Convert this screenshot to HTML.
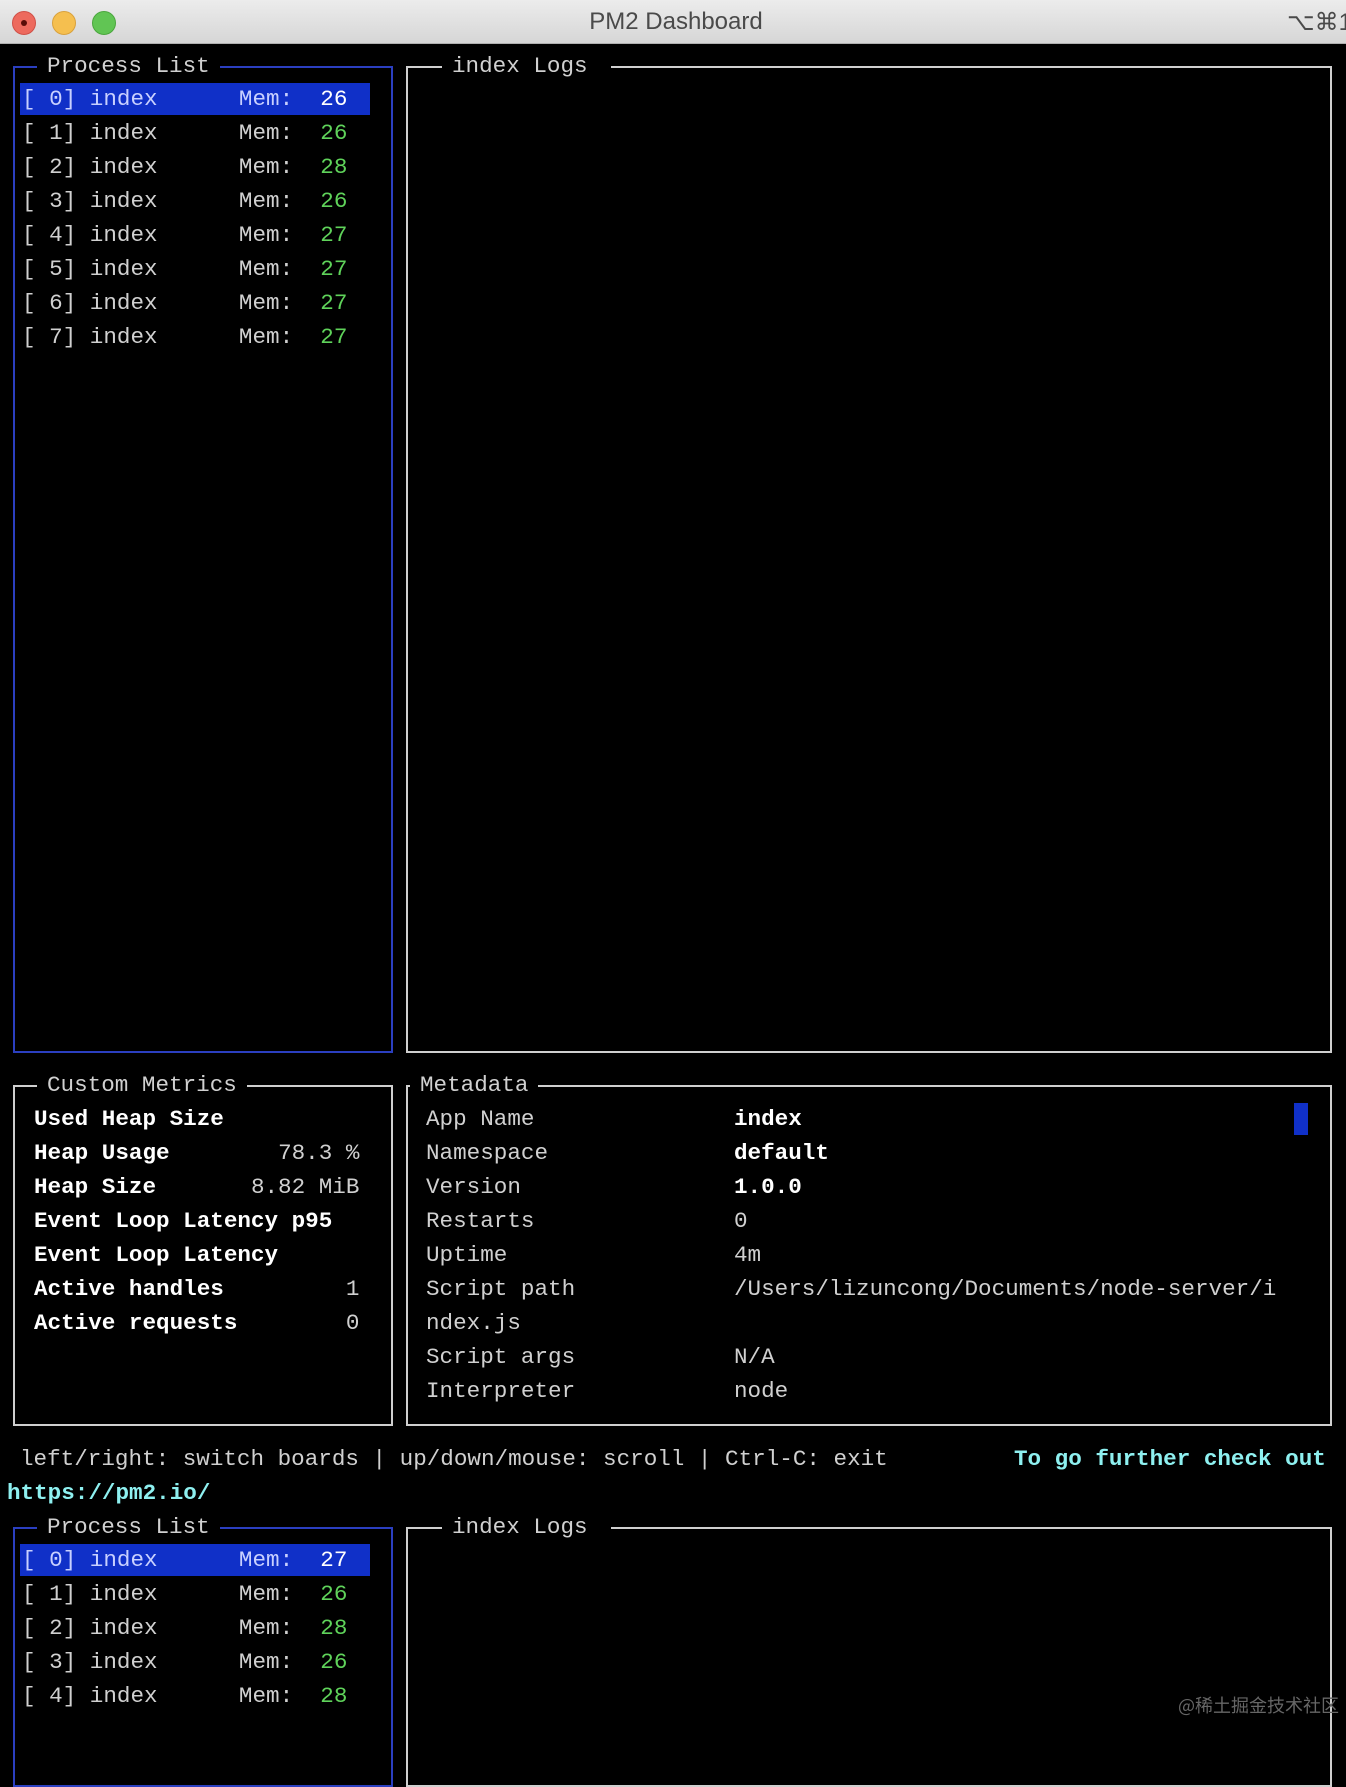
<!DOCTYPE html>
<html><head><meta charset="utf-8"><style>
*{margin:0;padding:0;box-sizing:border-box}
body{width:1346px;height:1722px;background:#000;overflow:hidden;position:relative;font-family:"Liberation Mono",monospace;font-size:22.6px;color:#d0d0d0}
.bar{position:absolute;left:0;top:0;width:1346px;height:44px;background:linear-gradient(#ececec,#d6d6d6);border-bottom:1px solid #b0b0b0}
.dot{position:absolute;top:11px;width:24px;height:24px;border-radius:50%}
.ttl{position:absolute;top:8px;left:0;width:1352px;text-align:center;font-family:"Liberation Sans",sans-serif;font-size:24px;color:#4a4a4a}
.box{position:absolute;border:2px solid #cfcfcf}
.blue{border-color:#2b3fc0}
.lbl{position:absolute;top:-17px;background:#000;padding:0 10px;line-height:30px;color:#d0d0d0;white-space:pre}
.t{position:absolute;white-space:pre;line-height:34px}
.g{color:#5fd35a}.w{color:#fff;font-weight:bold}.c{color:#8ef0f0;font-weight:bold}
.hl{position:absolute;background:#1030c8}
</style></head><body>
<div class="bar">
<div class="dot" style="left:12px;background:#ed6a5e;border:1px solid #d05047"><div style="position:absolute;left:8px;top:8px;width:6px;height:6px;border-radius:50%;background:#5a0d08"></div></div>
<div class="dot" style="left:52px;background:#f5bf4f;border:1px solid #d9a13c"></div>
<div class="dot" style="left:92px;background:#61c554;border:1px solid #4aa63d"></div>
<div class="ttl">PM2 Dashboard</div>
<div style="position:absolute;right:-6px;top:8px;font-family:'Liberation Sans',sans-serif;font-size:24px;color:#4a4a4a">⌥⌘1</div>
</div>

<div class="box blue" style="left:13px;top:66px;width:380px;height:987px"><div class="lbl" style="left:22px">Process List</div></div>
<div class="box" style="left:406px;top:66px;width:926px;height:987px"><div class="lbl" style="left:34px">index Logs </div></div>
<div class="hl" style="left:20px;top:83px;width:350px;height:32px"></div>
<div class="t" style="left:22px;top:82px;color:#c8d0ff">[ 0] index      Mem:  <span style="color:#fff">26</span></div>
<div class="t" style="left:22px;top:116px">[ 1] index      Mem:  <span class="g">26</span>
[ 2] index      Mem:  <span class="g">28</span>
[ 3] index      Mem:  <span class="g">26</span>
[ 4] index      Mem:  <span class="g">27</span>
[ 5] index      Mem:  <span class="g">27</span>
[ 6] index      Mem:  <span class="g">27</span>
[ 7] index      Mem:  <span class="g">27</span></div>

<div class="box" style="left:13px;top:1085px;width:380px;height:341px"><div class="lbl" style="left:22px">Custom Metrics</div></div>
<div class="box" style="left:406px;top:1085px;width:926px;height:341px"><div class="lbl" style="left:2px">Metadata</div></div>
<div class="t" style="left:34px;top:1102px;color:#fff;font-weight:bold">Used Heap Size
Heap Usage        <span style="font-weight:normal;color:#d0d0d0">78.3 %</span>
Heap Size       <span style="font-weight:normal;color:#d0d0d0">8.82 MiB</span>
Event Loop Latency p95
Event Loop Latency
Active handles         <span style="font-weight:normal;color:#d0d0d0">1</span>
Active requests        <span style="font-weight:normal;color:#d0d0d0">0</span></div>
<div class="t" style="left:426px;top:1102px">App Name
Namespace
Version
Restarts
Uptime
Script path
ndex.js
Script args
Interpreter</div>
<div class="t" style="left:734px;top:1102px"><span class="w">index</span>
<span class="w">default</span>
<span class="w">1.0.0</span>
0
4m
/Users/lizuncong/Documents/node-server/i

N/A
node</div>
<div style="position:absolute;left:1294px;top:1103px;width:14px;height:32px;background:#1030c8"></div>

<div class="t" style="left:20px;top:1442px">left/right: switch boards | up/down/mouse: scroll | Ctrl-C: exit</div>
<div class="t c" style="left:1014px;top:1442px">To go further check out</div>
<div class="t c" style="left:7px;top:1476px">https://pm2.io/</div>

<div class="box blue" style="left:13px;top:1527px;width:380px;height:260px"><div class="lbl" style="left:22px">Process List</div></div>
<div class="box" style="left:406px;top:1527px;width:926px;height:260px"><div class="lbl" style="left:34px">index Logs </div></div>
<div class="hl" style="left:20px;top:1544px;width:350px;height:32px"></div>
<div class="t" style="left:22px;top:1543px;color:#c8d0ff">[ 0] index      Mem:  <span style="color:#fff">27</span></div>
<div class="t" style="left:22px;top:1577px">[ 1] index      Mem:  <span class="g">26</span>
[ 2] index      Mem:  <span class="g">28</span>
[ 3] index      Mem:  <span class="g">26</span>
[ 4] index      Mem:  <span class="g">28</span></div>
<div style="position:absolute;left:1178px;top:1692px;font-family:'Noto Sans CJK SC',sans-serif;font-size:18px;color:#666">@稀土掘金技术社区</div>
</body></html>
